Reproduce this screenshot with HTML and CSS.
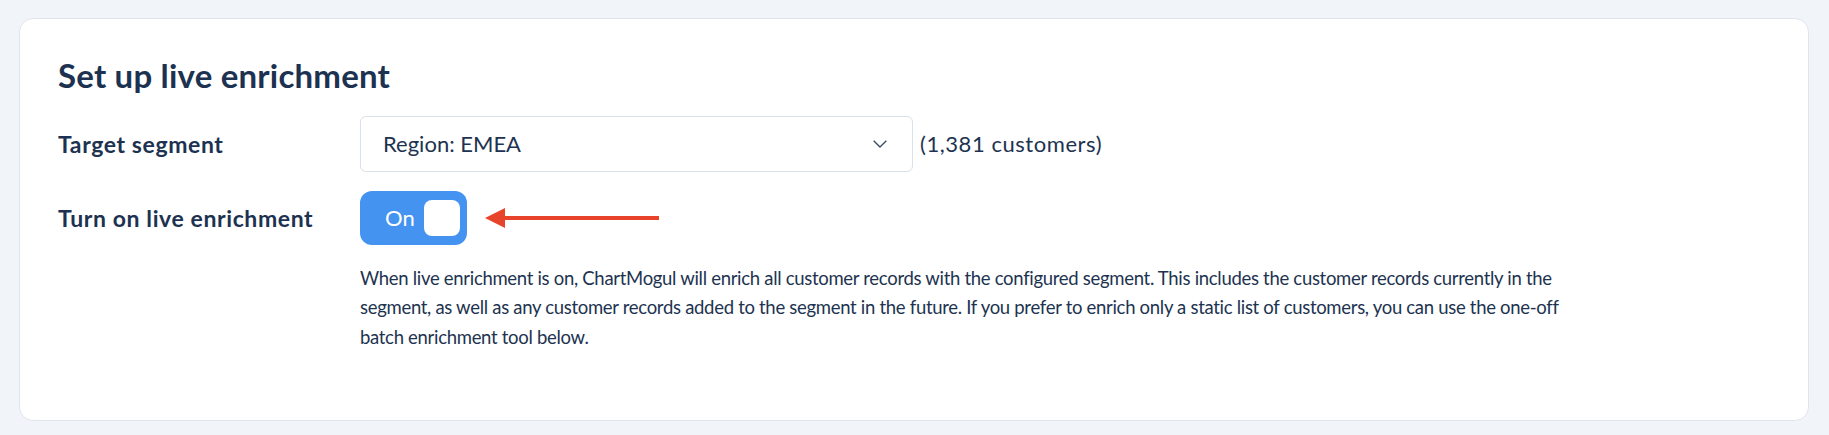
FILE: index.html
```html
<!DOCTYPE html>
<html lang="en">
<head>
<meta charset="utf-8">
<title>Set up live enrichment</title>
<link rel="stylesheet" href="styles.css">
</head>
<body>
<section class="card">
  <h2 class="title">Set up live enrichment</h2>
  <div class="form">
    <div class="label">Target segment</div>
    <div class="control">
      <div class="select">
        <span class="select-value">Region: EMEA</span>
        <svg class="chevron" width="14" height="8" viewBox="0 0 14 8" aria-hidden="true"><polyline points="0.7,0.7 7,7 13.3,0.7" fill="none" stroke="#3a4a5e" stroke-width="1.3"/></svg>
      </div>
      <span class="count">(1,381 customers)</span>
    </div>
    <div class="label">Turn on live enrichment</div>
    <div class="control">
      <div class="toggle">
        <span class="toggle-text">On</span>
        <span class="knob"></span>
      </div>
      <svg class="arrow" width="174" height="20" viewBox="0 0 174 20" aria-hidden="true">
        <polygon points="0,10 20,0 20,20" fill="#e8432b"/>
        <rect x="18" y="8" width="156" height="4" fill="#e8432b"/>
      </svg>
    </div>
    <div class="spacer"></div>
    <p class="help">When live enrichment is on, ChartMogul will enrich all customer records with the configured segment. This includes the customer records currently in the segment, as well as any customer records added to the segment in the future. If you prefer to enrich only a static list of customers, you can use the one-off batch enrichment tool below.</p>
  </div>
</section>
</body>
</html>
```
FILE: styles.css
```css
* { box-sizing: border-box; }

html, body {
  margin: 0;
  background: #f1f4f9;
}

body {
  padding: 18px 20px 0 19px;
  font-family: Lato, "Source Sans Pro", "Noto Sans", sans-serif;
  color: #1d3350;
}

.card {
  background: #ffffff;
  border: 1px solid #dfe5ee;
  border-radius: 14px;
  padding: 36px 38px 68px 38px;
}

.title {
  margin: 0 0 21px 0;
  font-size: 33px;
  line-height: 40px;
  font-weight: 700;
  letter-spacing: 0.2px;
  color: #1c3250;
}

.form {
  display: grid;
  grid-template-columns: 302px 1fr;
  row-gap: 19px;
  align-items: center;
}

.label {
  font-size: 23px;
  line-height: 30px;
  font-weight: 700;
  letter-spacing: 0.6px;
  color: #1c3250;
}

.control {
  display: flex;
  align-items: center;
}

.select {
  width: 553px;
  height: 56px;
  border: 1px solid #d9e1ea;
  border-radius: 6px;
  display: flex;
  align-items: center;
  justify-content: space-between;
  padding: 0 25px 0 22px;
  background: #fff;
}

.select-value {
  font-size: 22px;
  line-height: 30px;
}

.chevron {
  display: block;
}

.count {
  margin-left: 7px;
  font-size: 22px;
  line-height: 30px;
  letter-spacing: 0.55px;
}

.toggle {
  width: 107px;
  height: 54px;
  border-radius: 12px;
  background: #4593f1;
  display: flex;
  align-items: center;
  padding: 0 7px 0 25px;
  justify-content: space-between;
}

.toggle-text {
  color: #ffffff;
  font-size: 22px;
  line-height: 30px;
}

.knob {
  width: 36px;
  height: 36px;
  border-radius: 8px;
  background: #ffffff;
}

.arrow {
  display: block;
  margin-left: 18px;
}

.help {
  margin: 0;
  max-width: 1210px;
  font-size: 18.5px;
  line-height: 29.4px;
  letter-spacing: -0.3px;
}
```
